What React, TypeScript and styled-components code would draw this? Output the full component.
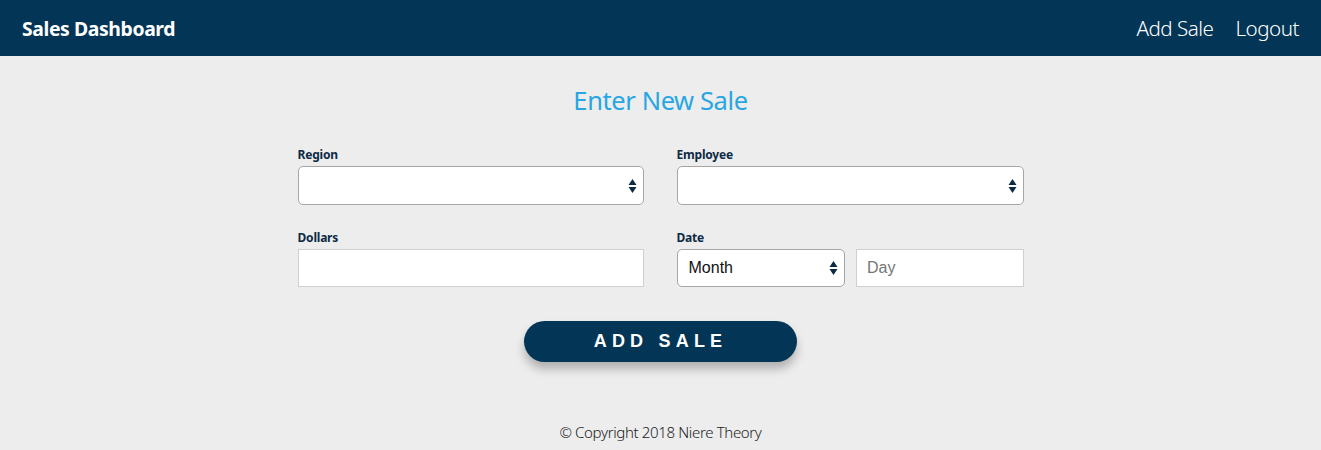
import React from "react";
import styled, { createGlobalStyle } from "styled-components";

const Global = createGlobalStyle`
  html, body { margin: 0; padding: 0; background: #ededed; }
  body { font-family: "Open Sans", "Noto Sans", sans-serif; }
  * { box-sizing: border-box; }
`;

const Page = styled.div`
  min-height: 450px;
  background: #ededed;
  display: flex;
  flex-direction: column;
`;

const Header = styled.header`
  height: 56px;
  background: #033556;
  display: flex;
  align-items: center;
  justify-content: space-between;
  padding: 0 22px;
  color: #fff;
`;

const Brand = styled.div`
  font-family: "Noto Sans", sans-serif;
  font-weight: 700;
  font-size: 19.4px;
  letter-spacing: -0.4px;
`;

const Nav = styled.nav`
  display: flex;
  gap: 22px;
`;

const NavLink = styled.a`
  font-family: "Noto Sans", sans-serif;
  font-size: 20.6px;
  font-weight: 300;
  letter-spacing: -0.5px;
  color: #fff;
  text-decoration: none;
`;

const Main = styled.main`
  display: flex;
  flex-direction: column;
  align-items: center;
  padding-top: 27px;
`;

const Title = styled.h1`
  margin: 0;
  font-family: "Noto Sans", sans-serif;
  font-weight: 400;
  font-size: 25.5px;
  letter-spacing: -0.4px;
  color: #27a6e3;
  line-height: 34px;
`;

const Form = styled.form`
  width: 726px;
  margin-top: 30px;
  display: grid;
  grid-template-columns: 346px 347px;
  column-gap: 33px;
  row-gap: 25px;
`;

const Field = styled.div`
  display: flex;
  flex-direction: column;
`;

const Label = styled.label`
  font-family: "Noto Sans", sans-serif;
  font-weight: 700;
  font-size: 12px;
  letter-spacing: -0.2px;
  color: #0c2a44;
  line-height: 16px;
  margin-bottom: 3px;
`;

const SelectBox = styled.div<{ $h: number }>`
  position: relative;
  height: ${(p) => p.$h}px;
  background: #fff;
  border: 1px solid #a6a6a6;
  border-radius: 5px;
  display: flex;
  align-items: center;
  padding-left: 11px;
  font-family: "Liberation Sans", Arial, sans-serif;
  font-size: 16px;
  color: #111;
`;

const Arrows = styled.svg`
  position: absolute;
  right: 6px;
  top: 50%;
  transform: translateY(-50%);
`;

const Input = styled.div<{ $h: number }>`
  height: ${(p) => p.$h}px;
  background: #fff;
  border: 1px solid #cfcfcf;
  display: flex;
  align-items: center;
  padding-left: 10px;
  font-family: "Liberation Sans", Arial, sans-serif;
  font-size: 16px;
  color: #777;
`;

const DateRow = styled.div`
  display: flex;
  gap: 11px;
  & > * {
    flex: 1 1 0;
  }
`;

const Button = styled.button`
  margin-top: 34px;
  width: 273px;
  height: 41px;
  border: none;
  border-radius: 21px;
  background: #033556;
  color: #fff;
  font-family: "Liberation Sans", Arial, sans-serif;
  font-size: 18px;
  font-weight: 700;
  letter-spacing: 5.2px;
  padding-left: 6px;
  box-shadow: 0 7px 10px rgba(0, 0, 0, 0.25);
`;

const Footer = styled.footer`
  margin-top: 60px;
  text-align: center;
  font-family: "Noto Sans", sans-serif;
  font-weight: 300;
  font-size: 15px;
  letter-spacing: -0.35px;
  color: #222;
`;

const ArrowIcon = () => (
  <Arrows width="9" height="16" viewBox="0 0 9 16">
    <path d="M4.5 1 L8.5 7 L0.5 7 Z" fill="#0c2a44" />
    <path d="M0.5 9 L8.5 9 L4.5 15 Z" fill="#0c2a44" />
  </Arrows>
);

export default function App() {
  return (
    <Page>
      <Global />
      <Header>
        <Brand>Sales Dashboard</Brand>
        <Nav>
          <NavLink>Add Sale</NavLink>
          <NavLink>Logout</NavLink>
        </Nav>
      </Header>
      <Main>
        <Title>Enter New Sale</Title>
        <Form>
          <Field>
            <Label>Region</Label>
            <SelectBox $h={39}>
              <ArrowIcon />
            </SelectBox>
          </Field>
          <Field>
            <Label>Employee</Label>
            <SelectBox $h={39}>
              <ArrowIcon />
            </SelectBox>
          </Field>
          <Field>
            <Label>Dollars</Label>
            <Input $h={38} />
          </Field>
          <Field>
            <Label>Date</Label>
            <DateRow>
              <SelectBox $h={38}>
                Month
                <ArrowIcon />
              </SelectBox>
              <Input $h={38}>Day</Input>
            </DateRow>
          </Field>
        </Form>
        <Button type="button">ADD SALE</Button>
        <Footer>© Copyright 2018 Niere Theory</Footer>
      </Main>
    </Page>
  );
}
